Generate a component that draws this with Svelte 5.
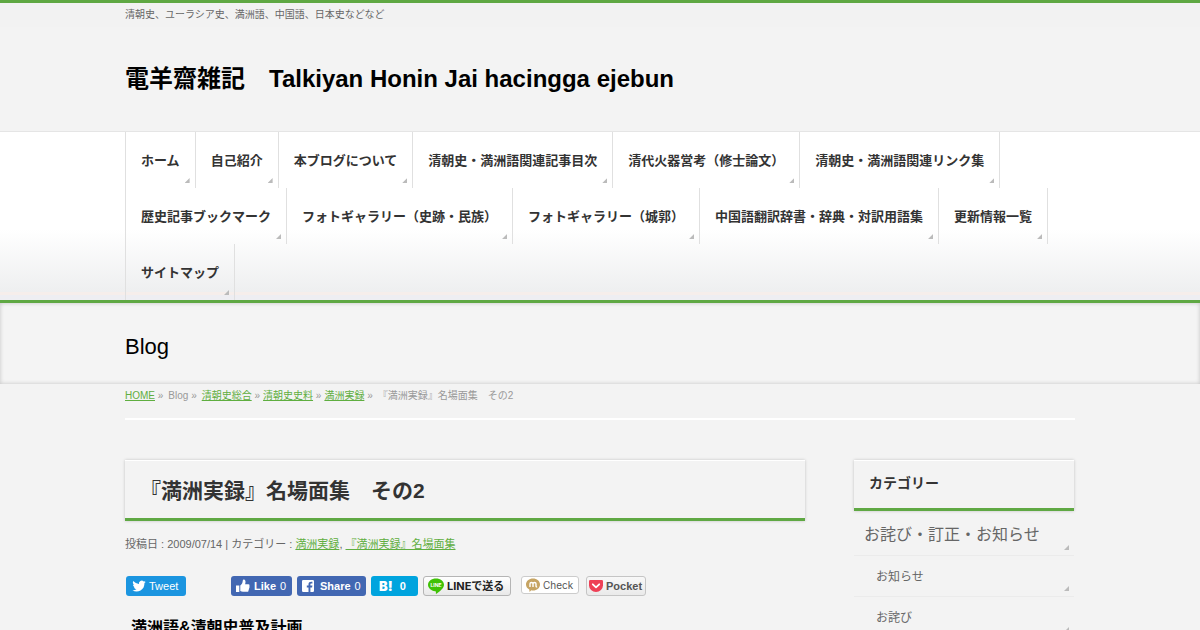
<script lang="ts">
  interface Crumb {
    label: string;
    href?: string;
    wide?: boolean;
  }

  const menu: string[] = [
    "ホーム",
    "自己紹介",
    "本ブログについて",
    "清朝史・満洲語関連記事目次",
    "清代火器営考（修士論文）",
    "清朝史・満洲語関連リンク集",
    "歴史記事ブックマーク",
    "フォトギャラリー（史跡・民族）",
    "フォトギャラリー（城郭）",
    "中国語翻訳辞書・辞典・対訳用語集",
    "更新情報一覧",
    "サイトマップ",
  ];

  const crumbs: Crumb[] = [
    { label: "HOME", href: "#home", wide: true },
    { label: "Blog", wide: true },
    { label: "清朝史総合", href: "#general" },
    { label: "清朝史史料", href: "#sources" },
    { label: "満洲実録", href: "#jitsuroku", wide: true },
  ];

  const categories = ["お知らせ", "お詫び"];
</script>

<header>
  <div class="description">
    <p class="inner">清朝史、ユーラシア史、満洲語、中国語、日本史などなど</p>
  </div>
  <div class="inner site-title">
    <a href="#home">電羊齋雑記　Talkiyan Honin Jai hacingga ejebun</a>
  </div>
</header>

<nav class="global-nav">
  <ul class="inner">
    {#each menu as item}
      <li><a class="corner" href="#menu">{item}</a></li>
    {/each}
  </ul>
</nav>

<div class="page-title">
  <div class="inner">Blog</div>
</div>

<div class="inner">
  <ol class="breadcrumb">
    {#each crumbs as crumb}
      <li class:wide={crumb.wide}>
        {#if crumb.href}<a href={crumb.href}>{crumb.label}</a>{:else}{crumb.label}{/if} »
      </li>
    {/each}
    <li>『満洲実録』名場面集　その2</li>
  </ol>

  <div class="columns">
    <main>
      <h1>『満洲実録』名場面集　その2</h1>
      <p class="meta">
        投稿日 : 2009/07/14 | カテゴリー : <a href="#jitsuroku">満洲実録</a>, <a href="#scenes">『満洲実録』名場面集</a>
      </p>

      <div class="social">
        <div class="tweet-slot">
          <button class="tweet">
            <svg width="14" height="14" viewBox="0 0 24 24" aria-hidden="true">
              <path fill="#fff" d="M23.6 4.9c-.8.4-1.7.6-2.7.8 1-.6 1.7-1.5 2.1-2.6-.9.5-1.9.9-3 1.1a4.7 4.7 0 0 0-8 4.3C8.100 8.300 4.600 6.400 2.300 3.600a4.700 4.700 0 0 0 1.500 6.300c-.8 0-1.500-.2-2.100-.6 0 2.300 1.600 4.200 3.700 4.700-.7.2-1.400.2-2.100.1.600 1.900 2.300 3.200 4.400 3.300A9.500 9.500 0 0 1 .7 19.300a13.400 13.400 0 0 0 20.600-11.900c.9-.7 1.700-1.500 2.300-2.500z" />
            </svg>
            Tweet
          </button>
        </div>
        <button class="facebook like">
          <svg width="14" height="14" viewBox="0 0 14 14" aria-hidden="true">
            <path fill="#fff" d="M0 6.500h3.300V13H0zM4.300 6.400c1.600-1 2.300-2.500 2.400-4.300C6.700.7 7.500.2 8.200.5c1.600.6 1.600 3 .9 4.700h3.400c1.100 0 1.500 1.300.7 1.900.7.6.5 1.700-.2 2 .4.7.1 1.500-.5 1.800.3.9-.2 1.900-1.100 1.900H7c-1 0-1.800-.3-2.700-.7z" />
          </svg>
          <b>Like</b> 0
        </button>
        <button class="facebook share">
          <svg width="12" height="12" viewBox="0 0 12 12" aria-hidden="true">
            <path fill="#fff" d="M1.200 0h9.600Q12 0 12 1.200v9.600Q12 12 10.800 12H8.400V7.500h1.700l.3-1.900h-2V4.500c0-.6.3-1 1-1h1V1.800C8 1.500 6.500 2.200 6.500 4.200v1.400H4.800v1.900h1.700V12H1.200Q0 12 0 10.800V1.200Q0 0 1.200 0z" />
          </svg>
          <b>Share</b> 0
        </button>
        <button class="hatena"><b>B!</b> <span>0</span></button>
        <button class="line">
          <svg width="16" height="16" viewBox="0 0 16 16" aria-hidden="true">
            <path fill="#3fc105" d="M8 .5c4.400 0 8 2.700 8 6.200 0 3.400-4 6.600-7.500 9-.7.400-.8-.1-.6-1.100.1-.7 0-1.300-.8-1.400C3 12.500 0 10.100 0 6.700 0 3.200 3.600.5 8 .5z" />
            <text x="8" y="9" text-anchor="middle" font-size="5" font-weight="bold" fill="#fff">LINE</text>
          </svg>
          LINEで送る
        </button>
        <button class="check">
          <svg width="14" height="14" viewBox="0 0 14 14" aria-hidden="true">
            <path fill="#c6a463" d="M7 .5c3.900 0 7 2.600 7 6s-3 6-7 6c-.6 0-1.300 0-1.800-.2L3.600 14l-.3-2.500C1.300 10.500 0 8.700 0 6.500c0-3.400 3.100-6 7-6z" />
            <path fill="none" stroke="#fff" stroke-width="1.400" d="M4 9V5.800C4 4 7 4 7 5.800V9M7 5.800C7 4 10 4 10 5.800V8c0 .8.500 1 1.200.8" />
          </svg>
          Check
        </button>
        <button class="pocket">
          <svg width="14" height="12" viewBox="0 0 14 12" aria-hidden="true">
            <path fill="#ee4056" d="M1.300 0h11.400Q14 0 14 1.300v4a7 6.700 0 0 1-14 0v-4Q0 0 1.300 0z" />
            <path fill="none" stroke="#fff" stroke-width="1.800" stroke-linecap="round" stroke-linejoin="round" d="M3.800 4.300 7 7.300l3.200-3" />
          </svg>
          Pocket
        </button>
      </div>

      <h2>満洲語&amp;清朝史普及計画</h2>
    </main>

    <aside>
      <h3>カテゴリー</h3>
      <a class="corner parent" href="#notice">お詫び・訂正・お知らせ</a>
      <ul>
        {#each categories as category}
          <li><a class="corner child" href="#category">{category}</a></li>
        {/each}
      </ul>
    </aside>
  </div>
</div>

<style>
  :global(body) {
    background: #f3f3f3;
    border-top: 3px solid #5fa843;
    color: #666;
    font-family: "Liberation Sans", "Noto Sans CJK JP", sans-serif;
  }

  ul,
  ol,
  p,
  h1,
  h2,
  h3 {
    margin: 0;
    padding: 0;
    list-style: none;
  }

  a {
    color: #5fae40;
  }

  .inner {
    box-sizing: border-box;
    max-width: 950px;
    margin: 0 auto;
  }

  .description {
    background: #f2f2f2;
    font-size: 10px;
    line-height: 24px;
  }

  .site-title {
    padding: 34px 0;
    font-size: 24px;
    font-weight: bold;
    line-height: 36px;
  }

  .site-title a {
    color: #000;
    text-decoration: none;
  }

  .global-nav {
    border-top: 1px solid #e5e5e5;
    border-bottom: 3px solid #5fa843;
    background: linear-gradient(#fff 0, #fff 58%, #eeeff0 95%, #f6eeeb 95%, #f6eeeb 97%, #eeeef2 97%);
  }

  .global-nav ul {
    display: flex;
    flex-wrap: wrap;
    border-left: 1px solid #e0e0e0;
  }

  .global-nav a {
    display: block;
    padding: 2px 15px 0;
    border-right: 1px solid #e0e0e0;
    color: #333;
    font-size: 13px;
    font-weight: bold;
    line-height: 54px;
    text-decoration: none;
  }

  /* small folded triangle in the lower right of menu links */
  .corner {
    position: relative;
  }

  .corner::after {
    content: "";
    position: absolute;
    right: 5px;
    bottom: 5px;
    width: 5px;
    height: 5px;
    background: #bbb;
    clip-path: polygon(100% 0, 100% 100%, 0 100%);
  }

  .page-title {
    padding: 28px 0 21px;
    background: #f4f4f4;
    box-shadow: inset 0 0 4px rgba(0, 0, 0, 0.2);
    color: #000;
    font-size: 22px;
    line-height: 32px;
  }

  .breadcrumb {
    display: flex;
    flex-wrap: wrap;
    padding-bottom: 10px;
    border-bottom: 2px solid #fff;
    color: #999;
    font-size: 10px;
    line-height: 24px;
  }

  .breadcrumb li {
    margin-right: 3px;
  }

  .breadcrumb .wide {
    margin-right: 5px;
  }

  .columns {
    display: flex;
    justify-content: space-between;
    gap: 49px;
    padding: 40px 1px 0 0;
  }

  main {
    flex: 1;
  }

  aside {
    width: 220px;
  }

  h1,
  h3 {
    border-top: 1px solid #fff;
    border-bottom: 3px solid #5fa843;
    box-shadow: 0 0 3px rgba(0, 0, 0, 0.2);
    color: #333;
  }

  h1 {
    padding: 3px 15px 0;
    font-size: 21px;
    line-height: 54px;
  }

  h3 {
    padding: 0 15px 2px;
    font-size: 14px;
    line-height: 45px;
  }

  .meta {
    padding: 13px 0 22px;
    font-size: 11px;
    line-height: 20px;
  }

  .social {
    display: flex;
    gap: 5px;
    padding-left: 1px;
  }

  .tweet-slot {
    width: 100px;
  }

  button {
    display: flex;
    align-items: center;
    box-sizing: border-box;
    height: 20px;
    padding: 0 5px;
    border: 0;
    border-radius: 3px;
    color: #fff;
    font-family: "Liberation Sans", "Noto Sans CJK JP", sans-serif;
    font-size: 11px;
    line-height: 20px;
    white-space: nowrap;
  }

  .tweet {
    gap: 3px;
    width: 60px;
    padding-left: 6px;
    background: #1b95e0;
  }

  .facebook {
    gap: 4px;
    background: #4267b2;
  }

  .like {
    width: 61px;
  }

  .share {
    width: 69px;
  }

  .share svg {
    margin-right: 2px;
  }

  .hatena {
    gap: 7px;
    width: 47px;
    padding-left: 8px;
    background: #00a4de;
    font-weight: bold;
  }

  .hatena b {
    font-family: Inter, sans-serif;
    font-size: 13px;
    font-weight: 900;
  }

  .line {
    gap: 3px;
    width: 88px;
    border: 1px solid #b5b5b5;
    background: linear-gradient(#fff, #e8e8e8);
    color: #222;
    font-family: Inter, "Noto Sans CJK JP", sans-serif;
    font-weight: bold;
  }

  .line {
    padding: 0 4px;
  }

  .check {
    gap: 3px;
    width: 58px;
    height: 18px;
    margin-left: 5px;
    padding: 0 4px;
    border: 1px solid #ccc;
    background: #fff;
    color: #555;
    font-family: Inter, sans-serif;
    font-size: 10px;
  }

  .pocket {
    gap: 3px;
    width: 60px;
    margin-left: 2px;
    padding: 0 2px;
    border: 1px solid #c5c5c5;
    background: linear-gradient(#f8f8f8, #eaeaea);
    color: #555;
    font-weight: bold;
  }

  h2 {
    padding: 20px 6px;
    color: #000;
    font-size: 16px;
    line-height: 24px;
  }

  .parent,
  .child {
    display: block;
    border-bottom: 1px solid #ebebeb;
    color: #666;
    text-decoration: none;
  }

  .parent {
    padding: 4px 10px 0;
    font-size: 16px;
    line-height: 40px;
  }

  .child {
    padding: 2px 22px 0;
    font-size: 12px;
    line-height: 38px;
  }
</style>
